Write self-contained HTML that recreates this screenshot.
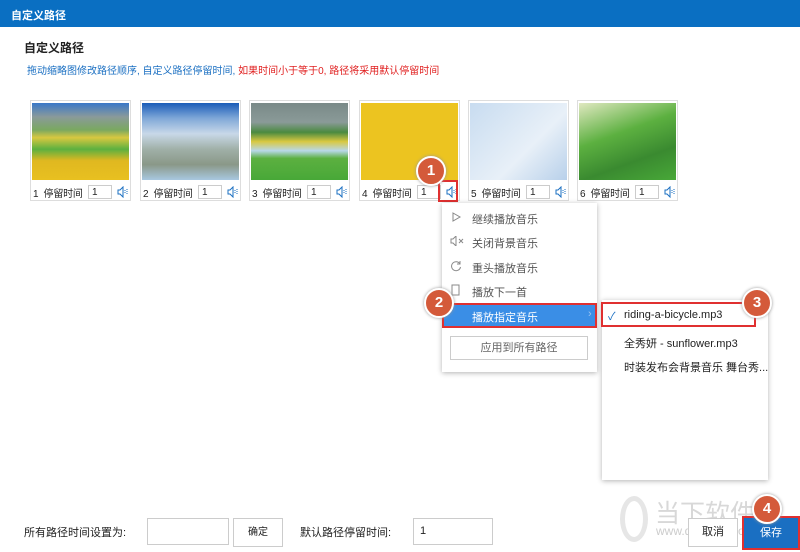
<!DOCTYPE html><html><head><meta charset="utf-8"><style>
*{margin:0;padding:0;box-sizing:border-box}
body{width:800px;height:552px;background:#fff;font-family:"Liberation Sans","Noto Sans CJK SC",sans-serif;font-size:11px;color:#222;position:relative;overflow:hidden}
.a{position:absolute;white-space:nowrap}
.bar{left:0;top:0;width:800px;height:27px;background:#0a6fc2;color:#fff;font-weight:bold;font-size:11px;padding:7px 11px}
.card{top:100px;width:101px;height:101px;border:1px solid #ddd;background:#fff}
.card .img{position:absolute;left:1px;top:2px;width:97px;height:77px}
.card .lb{position:absolute;left:2px;top:84px;font-size:10px;white-space:nowrap;letter-spacing:-0.2px}
.card .in{position:absolute;left:57px;top:84px;width:24px;height:14px;border:1px solid #ccc;font-size:10px;padding-left:3px;line-height:13px}
.spk{position:absolute;left:86px;top:85px}
.badge{width:30px;height:30px;border-radius:50%;background:#d45a3a;border:2px solid #fff;color:#fff;font-weight:bold;font-size:15px;text-align:center;line-height:26px;box-shadow:0 0 3px #999}
.menu{left:442px;top:203px;width:155px;height:169px;background:#fff;box-shadow:0 1px 5px rgba(0,0,0,.3)}
.mi{position:absolute;left:30px;color:#555;font-size:11px}
.sub{left:602px;top:300px;width:166px;height:180px;background:#fff;box-shadow:0 1px 5px rgba(0,0,0,.3)}
.inp{border:1px solid #ccc;background:#fff;height:27px}
</style></head><body>
<div class="a bar">自定义路径</div>
<div class="a" style="left:24px;top:39px;font-weight:bold;font-size:12px">自定义路径</div>
<div class="a" style="left:27px;top:62px;font-size:10px;color:#1a6fc2">拖动缩略图修改路径顺序, 自定义路径停留时间, <span style="color:#e02020">如果时间小于等于0, 路径将采用默认停留时间</span></div>

<div class="a card" style="left:30px"><div class="img" style="background:linear-gradient(#3a78c8 0,#8a9a9a 18%,#7aa860 35%,#d8c840 45%,#5cb040 60%,#e0b820 75%,#e8c020 100%)"></div><div class="lb">1 &nbsp;停留时间</div><div class="in">1</div><svg class="spk" width="12" height="12" viewBox="0 0 12 12"><path d="M1 4h2l3-3v10l-3-3H1z" fill="none" stroke="#1a6fc2"/><path d="M8 4v4M10 3v6" stroke="#1a6fc2" stroke-dasharray="1 1"/></svg></div>
<div class="a card" style="left:140px"><div class="img" style="background:linear-gradient(#1a5cb8 0,#80a8d8 20%,#c8d8e8 40%,#a0b0a8 60%,#8a9888 80%,#a8c8e0 100%)"></div><div class="lb">2 &nbsp;停留时间</div><div class="in">1</div><svg class="spk" width="12" height="12" viewBox="0 0 12 12"><path d="M1 4h2l3-3v10l-3-3H1z" fill="none" stroke="#1a6fc2"/><path d="M8 4v4M10 3v6" stroke="#1a6fc2" stroke-dasharray="1 1"/></svg></div>
<div class="a card" style="left:249px"><div class="img" style="background:linear-gradient(#7a8a88 0,#8a9a98 25%,#4a8a40 38%,#d8c840 50%,#b8d8e8 62%,#5cb040 72%,#48a838 100%)"></div><div class="lb">3 &nbsp;停留时间</div><div class="in">1</div><svg class="spk" width="12" height="12" viewBox="0 0 12 12"><path d="M1 4h2l3-3v10l-3-3H1z" fill="none" stroke="#1a6fc2"/><path d="M8 4v4M10 3v6" stroke="#1a6fc2" stroke-dasharray="1 1"/></svg></div>
<div class="a card" style="left:359px"><div class="img" style="background:#ecc420"></div><div class="lb">4 &nbsp;停留时间</div><div class="in">1</div><svg class="spk" width="12" height="12" viewBox="0 0 12 12"><path d="M1 4h2l3-3v10l-3-3H1z" fill="none" stroke="#1a6fc2"/><path d="M8 4v4M10 3v6" stroke="#1a6fc2" stroke-dasharray="1 1"/></svg></div>
<div class="a card" style="left:468px"><div class="img" style="background:linear-gradient(135deg,#c8dcf0,#e8f0f8 60%,#b8d0ea)"></div><div class="lb">5 &nbsp;停留时间</div><div class="in">1</div><svg class="spk" width="12" height="12" viewBox="0 0 12 12"><path d="M1 4h2l3-3v10l-3-3H1z" fill="none" stroke="#1a6fc2"/><path d="M8 4v4M10 3v6" stroke="#1a6fc2" stroke-dasharray="1 1"/></svg></div>
<div class="a card" style="left:577px"><div class="img" style="background:linear-gradient(160deg,#e0e8c0 0,#5cb040 40%,#3a8a30 70%,#48a838 100%)"></div><div class="lb">6 &nbsp;停留时间</div><div class="in">1</div><svg class="spk" width="12" height="12" viewBox="0 0 12 12"><path d="M1 4h2l3-3v10l-3-3H1z" fill="none" stroke="#1a6fc2"/><path d="M8 4v4M10 3v6" stroke="#1a6fc2" stroke-dasharray="1 1"/></svg></div>

<div class="a" style="left:438px;top:180px;width:20px;height:22px;border:2px solid #e03030"></div>
<div class="a badge" style="left:416px;top:156px">1</div>

<div class="a menu">
<svg class="a" style="left:9px;top:9px" width="10" height="10"><path d="M2 1l7 4-7 4z" fill="none" stroke="#888"/></svg>
<div class="mi" style="top:8px">继续播放音乐</div>
<svg class="a" style="left:8px;top:33px" width="14" height="10"><path d="M1 3h2l3-3v10l-3-3H1z" fill="none" stroke="#888"/><path d="M9 3l4 4M13 3l-4 4" stroke="#888"/></svg>
<div class="mi" style="top:32px">关闭背景音乐</div>
<svg class="a" style="left:8px;top:57px" width="12" height="12"><path d="M10 4A4.5 4.5 0 1 0 10.5 7" fill="none" stroke="#888"/><path d="M10 1v3H7" fill="none" stroke="#888"/></svg>
<div class="mi" style="top:57px">重头播放音乐</div>
<svg class="a" style="left:9px;top:81px" width="10" height="12"><path d="M1 1h7v10H1z" fill="none" stroke="#888"/></svg>
<div class="mi" style="top:81px">播放下一首</div>
<div class="a" style="left:0;top:100px;width:155px;height:25px;background:#3a8ee6;border:2px solid #e03030"></div>
<div class="mi" style="top:106px;color:#fff">播放指定音乐</div>
<div class="a" style="left:146px;top:105px;color:#9cc4f0">›</div>
<div class="a" style="left:8px;top:133px;width:138px;height:24px;border:1px solid #ccc;text-align:center;line-height:22px;color:#666">应用到所有路径</div>
</div>
<div class="a badge" style="left:424px;top:288px">2</div>

<div class="a sub">
<div class="a" style="left:-1px;top:2px;width:155px;height:25px;border:2px solid #e03030"></div>
<div class="a" style="left:6px;top:8px;color:#1a6fc2">✓</div>
<div class="a" style="left:22px;top:9px">riding-a-bicycle.mp3</div>
<div class="a" style="left:22px;top:35px">全秀妍 - sunflower.mp3</div>
<div class="a" style="left:22px;top:59px">时装发布会背景音乐 舞台秀...</div>
</div>
<div class="a badge" style="left:742px;top:288px">3</div>

<div class="a" style="left:24px;top:524px">所有路径时间设置为:</div>
<div class="a inp" style="left:147px;top:518px;width:82px"></div>
<div class="a inp" style="left:233px;top:518px;width:50px;height:29px;text-align:center;line-height:27px;font-size:10px">确定</div>
<div class="a" style="left:300px;top:524px">默认路径停留时间:</div>
<div class="a inp" style="left:413px;top:518px;width:80px;padding:6px 6px">1</div>
<div class="a" style="left:620px;top:496px;width:28px;height:46px;border:5px solid #e6e6e6;border-radius:50%"></div>
<div class="a" style="left:655px;top:494px;font-size:25px;color:#d8d8d8">当下软件园</div>
<div class="a" style="left:656px;top:524px;font-size:12px;color:#ccc">www.downxia.com</div>
<div class="a inp" style="left:688px;top:518px;width:50px;height:29px;text-align:center;line-height:27px">取消</div>
<div class="a" style="left:742px;top:516px;width:58px;height:34px;background:#1a6fc2;border:2px solid #e03030;color:#fff;text-align:center;line-height:30px">保存</div>
<div class="a badge" style="left:752px;top:494px">4</div>
</body></html>
